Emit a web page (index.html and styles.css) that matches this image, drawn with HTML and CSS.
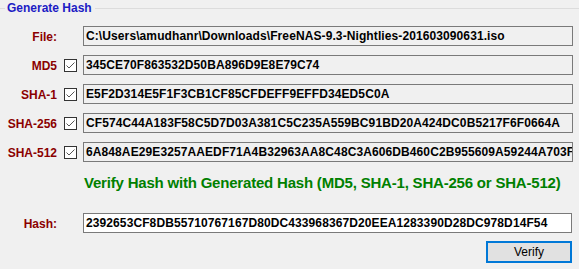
FILE: index.html
```html
<!DOCTYPE html>
<html>
<head>
   <meta http-equiv="Content-Type" content="text/html; charset=UTF-8" />
   <link rel="stylesheet" href="styles.css">
</head>
<body>

<div id="hasher">
    <div class="legend">
        <span class="rule lead"></span>
        <span class="title">Generate Hash</span>
        <span class="rule"></span>
    </div>

    <div class="rows">
        <span class="name">File:</span>
        <span></span>
        <div class="box">C:\Users\amudhanr\Downloads\FreeNAS-9.3-Nightlies-201603090631.iso</div>

        <span class="name">MD5</span>
        <span class="check"><svg width="13" height="13" viewBox="0 0 13 13"><path d="M2.5 6.5 L5 9 L10.5 3.5" fill="none" stroke="#555" stroke-width="1"/></svg></span>
        <div class="box">345CE70F863532D50BA896D9E8E79C74</div>

        <span class="name">SHA-1</span>
        <span class="check"><svg width="13" height="13" viewBox="0 0 13 13"><path d="M2.5 6.5 L5 9 L10.5 3.5" fill="none" stroke="#555" stroke-width="1"/></svg></span>
        <div class="box">E5F2D314E5F1F3CB1CF85CFDEFF9EFFD34ED5C0A</div>

        <span class="name">SHA-256</span>
        <span class="check"><svg width="13" height="13" viewBox="0 0 13 13"><path d="M2.5 6.5 L5 9 L10.5 3.5" fill="none" stroke="#555" stroke-width="1"/></svg></span>
        <div class="box">CF574C44A183F58C5D7D03A381C5C235A559BC91BD20A424DC0B5217F6F0664A</div>

        <span class="name">SHA-512</span>
        <span class="check"><svg width="13" height="13" viewBox="0 0 13 13"><path d="M2.5 6.5 L5 9 L10.5 3.5" fill="none" stroke="#555" stroke-width="1"/></svg></span>
        <div class="box">6A848AE29E3257AAEDF71A4B32963AA8C48C3A606DB460C2B955609A59244A703F</div>
    </div>

    <div class="verify-title">Verify Hash with Generated Hash (MD5, SHA-1, SHA-256 or SHA-512)</div>

    <div class="rows hash-row">
        <span class="name">Hash:</span>
        <span></span>
        <div class="box input">2392653CF8DB55710767167D80DC433968367D20EEA1283390D28DC978D14F54</div>
    </div>

    <div class="actions">
        <button class="button">Verify</button>
    </div>
</div>

</body>
</html>
```

FILE: styles.css
```css
* {
    padding: 0; margin: 0;
    box-sizing: border-box;
}
body {
    background-color: #f0f0f0;
    font-family: "Liberation Sans", Arial, sans-serif;
    width: 579px;
    height: 269px;
    overflow: hidden;
}
div.legend {
    display: flex;
    align-items: center;
    height: 15px;
    margin-top: 1px;
}
span.rule {
    flex: 1;
    height: 1px;
    background-color: #dcdcdc;
}
span.rule.lead {
    flex: none;
    width: 5px;
}
span.title {
    font-size: 12px;
    font-weight: bold;
    color: #1c1cc4;
    padding: 0 3px 0 2px;
    line-height: 15px;
}

div.rows {
    display: grid;
    grid-template-columns: 58px 25px 490px;
    grid-auto-rows: 20px;
    row-gap: 9px;
    margin-top: 10px;
    align-items: center;
}
span.name {
    font-size: 12px;
    font-weight: bold;
    color: #8b0000;
    text-align: right;
    padding-right: 1px;
    padding-top: 1px;
}
span.check {
    display: block;
    width: 13px;
    height: 13px;
    margin-left: 6px;
    border: 1px solid #333;
    background-color: #fff;
    position: relative;
}
span.check svg {
    position: absolute;
    left: -1px;
    top: -1px;
}
div.box {
    height: 20px;
    border: 1px solid #7a7a7a;
    padding: 0 2px;
    font-size: 12px;
    font-weight: bold;
    line-height: 18px;
    letter-spacing: 0.1px;
    color: #000;
    white-space: nowrap;
    overflow: hidden;
}
div.box.input {
    background-color: #fff;
}

div.verify-title {
    margin-top: 12px;
    margin-left: 84px;
    font-size: 15px;
    font-weight: bold;
    color: #008000;
    line-height: 18px;
    letter-spacing: -0.2px;
    white-space: nowrap;
}
div.hash-row {
    margin-top: 21px;
    grid-template-columns: 58px 25px 489px;
}

div.actions {
    padding-left: 486px;
    margin-top: 8px;
}
button.button {
    width: 86px;
    height: 22px;
    border: 2px solid #0078d7;
    background-color: #e1e1e1;
    font-family: "Liberation Sans", Arial, sans-serif;
    font-size: 12px;
    color: #000;
}
```
